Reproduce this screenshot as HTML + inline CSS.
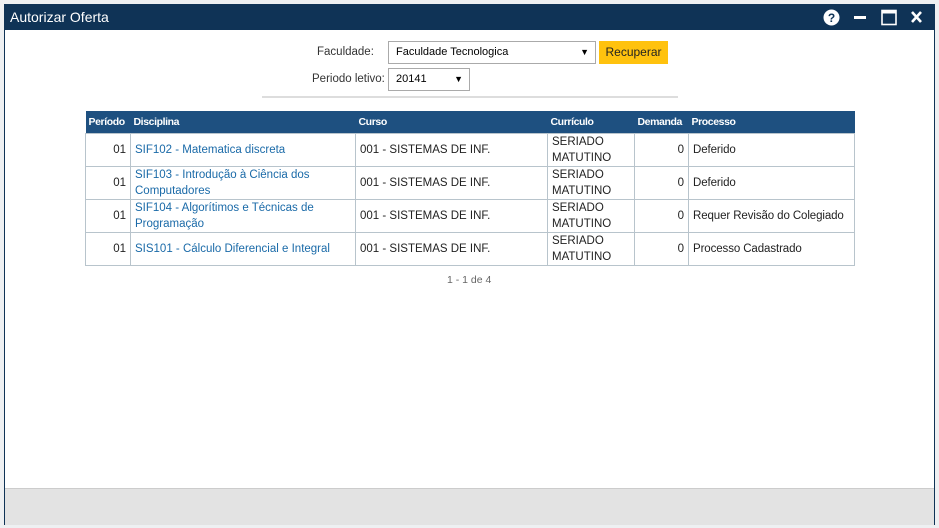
<!DOCTYPE html>
<html><head><meta charset="utf-8"><style>
body{margin:0;width:939px;height:528px;background:#eef0f2;font-family:"Liberation Sans",sans-serif;font-size:12px;position:relative;overflow:hidden}
.win{position:absolute;left:4px;top:4px;width:929px;height:520px;border:1px solid #0f3356;border-top:none;background:#fff}
.title{position:absolute;left:0;top:0;width:929px;height:26px;background:#0f3356;color:#fff;font-size:14px;line-height:26px;text-indent:5px}
.foot{position:absolute;left:0;top:484px;width:929px;height:36px;background:#e3e3e3;border-top:1px solid #ccc}
.lbl{position:absolute;color:#333;font-size:11.5px}
.sel{position:absolute;border:1px solid #aaa;background:#fff;font-size:11px;line-height:20px;padding-left:7px;box-sizing:border-box;color:#000}
.sel span{position:absolute;right:6px;top:0;font-size:9px}
.btn{position:absolute;left:599px;top:41px;width:69px;height:23px;background:#ffc20e;font-size:12px;line-height:23px;text-align:center;color:#222}
table{position:absolute;left:85px;top:111px;border-collapse:collapse;width:770px;table-layout:fixed}
th{background:#1e5080;color:#fff;font-size:10.5px;text-align:left;height:22px;padding:0 0 0 3px;font-weight:bold;letter-spacing:-.4px;white-space:nowrap}
td{border:1px solid #b8c4cc;height:32px;padding:0 4px;line-height:16px;color:#222;font-size:11.5px}
td.a{color:#1a6aa8}
td.r{text-align:right}
td.n{white-space:nowrap;letter-spacing:-.1px}
</style></head><body>
<div class="win">
<div class="title">Autorizar Oferta</div>
<svg style="position:absolute;left:818px;top:5px" width="110" height="17">
<circle cx="8.5" cy="8.5" r="8" fill="#fff"/><text x="8.5" y="13" font-size="12" font-weight="bold" text-anchor="middle" fill="#0f3356" font-family="Liberation Sans">?</text>
<rect x="31" y="7" width="12" height="3" fill="#fff"/>
<rect x="59" y="1.5" width="14" height="14" fill="none" stroke="#fff" stroke-width="1.6"/><rect x="59" y="1.5" width="14" height="3" fill="#fff"/>
<path d="M89 3L98 13M98 3L89 13" stroke="#fff" stroke-width="2.6"/>
</svg>
<div class="foot"></div>
</div>
<div class="lbl" style="left:317px;top:46px">Faculdade:</div>
<div class="sel" style="left:388px;top:41px;width:208px;height:23px;line-height:21px">Faculdade Tecnologica<span>▼</span></div>
<div class="btn">Recuperar</div>
<div class="lbl" style="left:312px;top:73px">Periodo letivo:</div>
<div class="sel" style="left:388px;top:68px;width:82px;height:23px;line-height:21px">20141<span>▼</span></div>
<div style="position:absolute;left:262px;top:96px;width:416px;height:2px;background:#ddd"></div>
<table>
<colgroup><col style="width:45px"><col style="width:225px"><col style="width:192px"><col style="width:87px"><col style="width:54px"><col style="width:166px"></colgroup>
<tr><th>Período</th><th>Disciplina</th><th>Curso</th><th>Currículo</th><th>Demanda</th><th>Processo</th></tr>
<tr><td class="r">01</td><td class="a">SIF102 - Matematica discreta</td><td>001 - SISTEMAS DE INF.</td><td>SERIADO MATUTINO</td><td class="r">0</td><td class="n">Deferido</td></tr>
<tr><td class="r">01</td><td class="a">SIF103 - Introdução à Ciência dos Computadores</td><td>001 - SISTEMAS DE INF.</td><td>SERIADO MATUTINO</td><td class="r">0</td><td class="n">Deferido</td></tr>
<tr><td class="r">01</td><td class="a">SIF104 - Algorítimos e Técnicas de Programação</td><td>001 - SISTEMAS DE INF.</td><td>SERIADO MATUTINO</td><td class="r">0</td><td class="n">Requer Revisão do Colegiado</td></tr>
<tr><td class="r">01</td><td class="a">SIS101 - Cálculo Diferencial e Integral</td><td>001 - SISTEMAS DE INF.</td><td>SERIADO MATUTINO</td><td class="r">0</td><td class="n">Processo Cadastrado</td></tr>
</table>
<div style="position:absolute;left:447px;top:274px;font-size:10.5px;color:#666">1 - 1 de 4</div>
</body></html>
